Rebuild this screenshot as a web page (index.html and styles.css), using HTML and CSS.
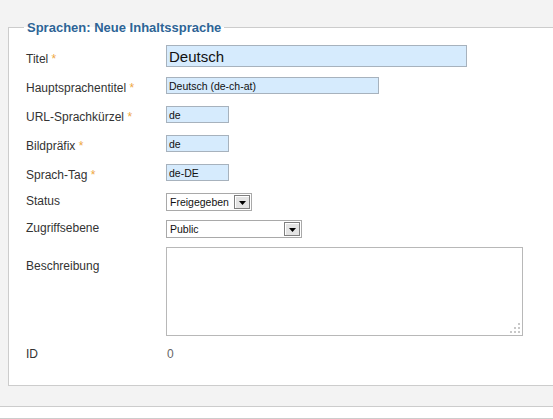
FILE: index.html
```html
<!DOCTYPE html>
<html lang="de">
<head>
<meta charset="utf-8">
<title>Sprachen: Neue Inhaltssprache</title>
<link rel="stylesheet" href="styles.css">
</head>
<body>
<fieldset class="panel">
  <legend class="panel-title">Sprachen: Neue Inhaltssprache</legend>
  <ul class="form">
    <li class="row r1">
      <label class="lbl">Titel <span class="star">*</span></label>
      <input class="inp big w-title" type="text" value="Deutsch">
    </li>
    <li class="row r2">
      <label class="lbl">Hauptsprachentitel <span class="star">*</span></label>
      <input class="inp w-main" type="text" value="Deutsch (de-ch-at)">
    </li>
    <li class="row r3">
      <label class="lbl">URL-Sprachkürzel <span class="star">*</span></label>
      <input class="inp w-short" type="text" value="de">
    </li>
    <li class="row r3">
      <label class="lbl">Bildpräfix <span class="star">*</span></label>
      <input class="inp w-short" type="text" value="de">
    </li>
    <li class="row r3">
      <label class="lbl">Sprach-Tag <span class="star">*</span></label>
      <input class="inp w-short" type="text" value="de-DE">
    </li>
    <li class="row r6">
      <label class="lbl">Status</label>
      <div class="select w-status">
        <span class="select-value">Freigegeben</span>
        <span class="select-btn"><svg width="7" height="4" viewBox="0 0 7 4"><path d="M0 0H7L3.5 4Z" fill="#000"/></svg></span>
      </div>
    </li>
    <li class="row r6">
      <label class="lbl">Zugriffsebene</label>
      <div class="select w-access">
        <span class="select-value">Public</span>
        <span class="select-btn"><svg width="7" height="4" viewBox="0 0 7 4"><path d="M0 0H7L3.5 4Z" fill="#000"/></svg></span>
      </div>
    </li>
    <li class="row r8">
      <label class="lbl">Beschreibung</label>
      <div class="textarea">
        <svg class="grip" width="10" height="10" viewBox="0 0 10 10">
          <rect x="8" y="0" width="2" height="2" fill="#c8c8c8"/>
          <rect x="4" y="4" width="2" height="2" fill="#c8c8c8"/>
          <rect x="8" y="4" width="2" height="2" fill="#c8c8c8"/>
          <rect x="0" y="8" width="2" height="2" fill="#c8c8c8"/>
          <rect x="4" y="8" width="2" height="2" fill="#c8c8c8"/>
          <rect x="8" y="8" width="2" height="2" fill="#c8c8c8"/>
        </svg>
      </div>
    </li>
    <li class="row r9">
      <label class="lbl">ID</label>
      <span class="readonly">0</span>
    </li>
  </ul>
</fieldset>
<div class="next-panel"></div>
</body>
</html>
```
FILE: styles.css
```css
html, body {
  margin: 0;
  overflow: hidden;
}
body {
  background: #f3f3f3;
  font-family: "Liberation Sans", Arial, sans-serif;
  font-size: 12px;
  color: #333;
  padding-top: 20px;
  width: 553px;
  height: 419px;
  box-sizing: border-box;
}
.panel {
  margin: 0 0 0 8px;
  width: 545px;
  min-width: 0;
  border: 1px solid #cccccc;
  border-right: 0;
  background: #fff;
  padding: 0 0 20px 15px;
  box-sizing: border-box;
}
.panel-title {
  font-size: 13px;
  line-height: 15px;
  font-weight: bold;
  color: #2d6496;
  padding: 0 3px;
}
.form {
  list-style: none;
  margin: 10px 0 0 0;
  padding: 0 0 0 2px;
}
.row {
  display: flex;
  align-items: flex-start;
}
.r1 { height: 32px; }
.r2 { height: 29px; }
.r3 { height: 29px; }
.r6 { height: 27px; }
.r8 { height: 98px; }
.r9 { height: 20px; }
.lbl {
  width: 140px;
  flex: none;
  line-height: 14px;
  padding-top: 4px;
  color: #333;
}
.r1 .lbl { padding-top: 7px; }
.r6 .lbl { padding-top: 1px; }
.r8 .lbl { padding-top: 12px; }
.r9 .lbl { padding-top: 2px; }
.star { color: #eea742; }
.inp {
  box-sizing: border-box;
  height: 17px;
  margin: 0;
  padding: 0 2px;
  border: 1px solid #a7b2bd;
  background: #d6ebfd;
  font-family: "Liberation Sans", Arial, sans-serif;
  font-size: 10.5px;
  color: #111;
  outline: none;
}
.big {
  height: 22px;
  font-size: 15px;
  padding: 0 2px;
}
.w-title { width: 301px; }
.w-main { width: 213px; }
.w-short { width: 63px; }
.select {
  box-sizing: border-box;
  height: 18px;
  border: 1px solid #a9a9a9;
  background: #fff;
  display: flex;
  align-items: center;
  justify-content: space-between;
  padding: 0 1px 0 3px;
  font-size: 10.5px;
  color: #111;
}
.w-status { width: 86px; }
.w-access { width: 136px; }
.select-btn {
  box-sizing: border-box;
  width: 16px;
  height: 14px;
  border: 1px solid #7f7f7f;
  background: #e4e4e4;
  box-shadow: inset 1px 1px 0 #fff;
  display: flex;
  align-items: center;
  justify-content: center;
}
.select-btn svg { display: block; margin-top: 2px; }
.textarea {
  position: relative;
  box-sizing: border-box;
  width: 357px;
  height: 89px;
  border: 1px solid #b8b8b8;
  background: #fff;
}
.grip {
  position: absolute;
  right: 2px;
  bottom: 2px;
}
.readonly {
  padding: 2px 0 0 1px;
  line-height: 14px;
  color: #666;
}
.next-panel {
  margin-top: 20px;
  height: 11px;
  border-top: 1px solid #cccccc;
  border-bottom: 1px solid #cccccc;
  background: #fff;
}
```
